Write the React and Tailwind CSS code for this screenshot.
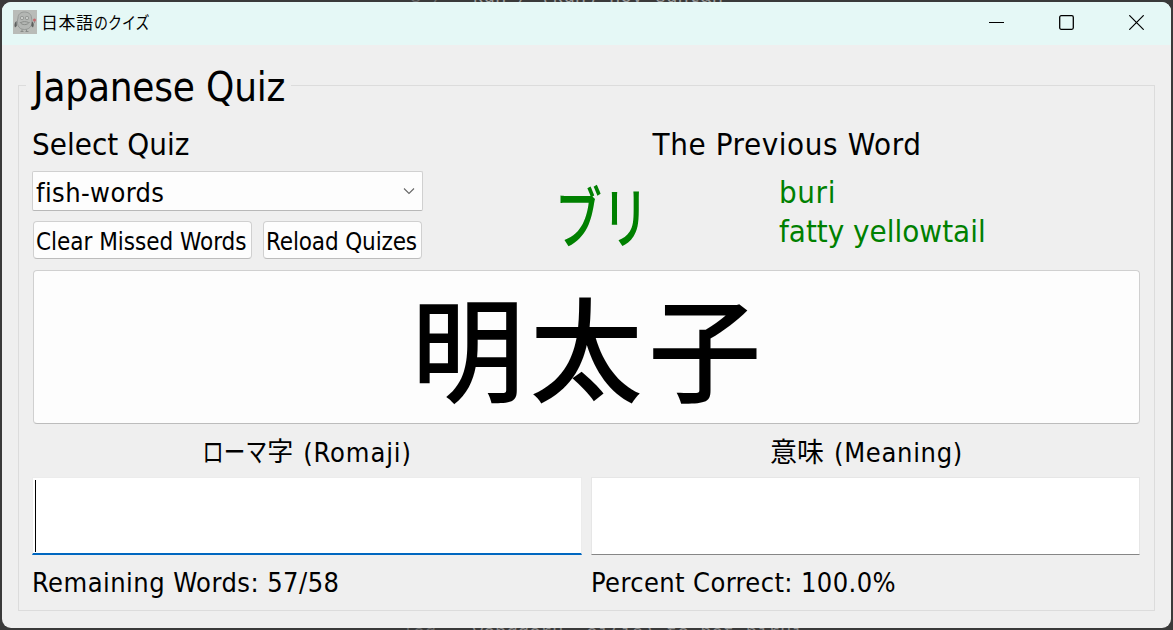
function AppIcon() {
  return (
    <svg width="24" height="24" viewBox="0 0 24 24" className="block">
      <rect width="24" height="24" fill="#b9bcb8" />
      <path d="M5 8c0-4 3-6 6.500-6s7 2 7 6c1.500 5 0 11.500-7 11.500S3.500 13 5 8z" fill="#b3b6b3" stroke="#929593" strokeWidth=".9" />
      <path d="M3.500 11c-2 1.500-2.600 4-1.500 6.500l1.800-1.500zM19 11.500c2 1 2.300 3.500 1 6l-1.800-1.500z" fill="#5d605e" />
      <circle cx="9" cy="8" r="1.700" fill="#c8cbc8" stroke="#858885" strokeWidth=".7" />
      <circle cx="14" cy="8" r="1.700" fill="#c8cbc8" stroke="#858885" strokeWidth=".7" />
      <path d="M7 12c1.500 3.500 7.500 3.500 9.500 0M8 12.500c2-1.200 5-1.200 7.500 0" fill="none" stroke="#858885" strokeWidth=".9" />
      <path d="M9 19.500v2M13.500 19.500v2M7.500 21.500h3M12.500 21.500h3" stroke="#858885" strokeWidth=".9" />
      <path d="M21.500 9v4" stroke="#858885" strokeWidth=".8" />
      <circle cx="21.500" cy="10" r="1.500" fill="#c4686c" />
    </svg>
  );
}

function TitleBar() {
  return (
    <header className="flex h-[43px] items-center bg-[#e5f8f6] pl-[11px]">
      <div className="pb-[3px]">
        <AppIcon />
      </div>
      <h1 className="ml-[4px] flex pb-[2px] text-[17px] leading-[20px]">
        <span className="tracking-[0.5px]">日本語</span>
        <span className="origin-left scale-x-[0.82]">のクイズ</span>
      </h1>
      <div className="ml-auto flex h-full pb-[3px]">
        <button aria-label="Minimize" className="flex w-[69px] items-center justify-center">
          <svg width="15" height="15" viewBox="0 0 15 15"><path d="M0 7.500h15" stroke="#000" /></svg>
        </button>
        <button aria-label="Maximize" className="flex w-[71px] items-center justify-center">
          <svg width="15" height="15" viewBox="0 0 15 15"><rect x=".7" y=".7" width="13.600" height="13.600" rx="1.500" fill="none" stroke="#000" strokeWidth="1.300" /></svg>
        </button>
        <button aria-label="Close" className="flex w-[69px] items-center justify-center">
          <svg width="15" height="15" viewBox="0 0 15 15"><path d="M.3.3l14.400 14.400M14.700.3L.3 14.700" stroke="#000" strokeWidth="1.200" /></svg>
        </button>
      </div>
    </header>
  );
}

function QuizPicker() {
  return (
    <section className="w-[391px]">
      <h2 className="h-[31px] text-[31px] leading-[32px] tracking-[0.05px]">Select Quiz</h2>
      <button className="mt-[12px] flex h-[40px] w-full items-center justify-between rounded-[2px] border border-[#d0d0d0] border-b-[#b8b8b8] bg-[#fdfdfd] pr-[7px] pl-[3px] text-[27px] tracking-[0.4px]">
        <span className="pt-[2px] leading-[35px]">fish-words</span>
        <svg width="12" height="8" viewBox="0 0 12 8"><path d="M1 1.500l5 5 5-5" fill="none" stroke="#666" strokeWidth="1.100" /></svg>
      </button>
      <div className="mt-[10px] flex gap-[11px] pl-px text-[24px] leading-[35px] whitespace-nowrap">
        <button className="flex h-[38px] w-[219px] items-start rounded-[4px] border border-[#d0d0d0] border-b-[#bcbcbc] bg-[#fdfdfd] pt-[3px] pl-[2px] tracking-[-0.02px]">Clear Missed Words</button>
        <button className="flex h-[38px] w-[159px] items-start rounded-[4px] border border-[#d0d0d0] border-b-[#bcbcbc] bg-[#fdfdfd] pt-[3px] pl-[2px] tracking-[-0.14px]">Reload Quizes</button>
      </div>
    </section>
  );
}

function PreviousWord() {
  return (
    <section className="flex-1">
      <h2 className="h-[31px] pl-[2px] text-center text-[31px] leading-[32px] tracking-[0.6px]">The Previous Word</h2>
      <div className="mt-[14px] flex text-[#008000]">
        <div className="flex h-[78px] w-[338px] justify-center pt-[8px] pl-[2px] text-[67px] leading-[78px]">
          <span className="scale-x-[0.7] font-medium">ブリ</span>
        </div>
        <div className="ml-[9px] text-[31px] leading-[39px]">
          <p className="tracking-[0.6px]">buri</p>
          <p>fatty yellowtail</p>
        </div>
      </div>
    </section>
  );
}

export default function App() {
  return (
    <div className="flex h-[630px] w-[1173px] flex-col overflow-hidden bg-[#3a3a3a] font-['DejaVu_Sans_Condensed','Noto_Sans_CJK_JP',sans-serif] text-black">
      <div aria-hidden="true" className="flex h-[2px] items-end overflow-hidden pl-[410px] font-['Liberation_Mono'] text-[19px] leading-[10px] whitespace-pre text-[#9a9a9a]">
        <span className="text-[#6a6a6a]">8 /</span>
        <span className="ml-[28px]">kun / (kun) nov suntan</span>
      </div>
      <main className="mx-[2px] flex h-[626px] flex-col overflow-hidden rounded-[9px] bg-[#efefef]">
        <TitleBar />
        <fieldset className="mx-[16px] mt-[17px] h-[549px] min-w-0 border border-[#dcdcdc] pr-[14px] pl-[13px]">
          <legend className="-ml-[6px] h-[46px] pr-[6px] pl-[7px] text-[40px] leading-[50px] tracking-[-0.2px]">Japanese Quiz</legend>
          <div className="flex gap-[9px] pt-[20px]">
            <QuizPicker />
            <PreviousWord />
          </div>
          <div className="mt-[11px] ml-px flex h-[154px] justify-center rounded-[4px] border border-[#d0d0d0] border-b-[#bcbcbc] bg-[#fdfdfd] pt-[7px] pl-[5px] text-[113px] leading-[152px] font-medium tracking-[5.5px]">明太子</div>
          <div className="grid grid-cols-[550px_549px] gap-x-[9px] text-[27px]">
            <label htmlFor="romaji" className="flex h-[53px] items-center justify-center pt-[4px] leading-[49px]">
              <span className="-ml-[16px] origin-right scale-x-[0.8]">ローマ</span>
              <span className="text-[26px]">字</span>
              <span className="ml-[10px] tracking-[0.9px]">(Romaji)</span>
            </label>
            <label htmlFor="meaning" className="flex h-[53px] items-center justify-center pt-[4px] pl-[2px] leading-[49px]">
              意味<span className="ml-[10px] tracking-[0.7px]">(Meaning)</span>
            </label>
            <div id="romaji" className="h-[78px] border border-b-2 border-[#ececec] border-b-[#0067c0] bg-white pt-[2px] pl-[2px]">
              <div className="h-[72px] w-px bg-black" />
            </div>
            <div id="meaning" className="h-[78px] border border-[#e6e6e6] border-b-[#868686] bg-white" />
            <p className="pt-[3px] leading-[50px] tracking-[0.46px]">Remaining Words: 57/58</p>
            <p className="pt-[3px] leading-[50px] tracking-[0.39px]">Percent Correct: 100.0%</p>
          </div>
        </fieldset>
      </main>
      <div aria-hidden="true" className="flex h-[2px] items-start overflow-hidden pl-[402px] font-['Liberation_Mono'] text-[19px] leading-[10px] whitespace-pre text-[#8a8a8a]">
        <span className="text-[#6a6a6a]">lag</span>
        <span className="ml-[36px]">yonggoru .ei(is) to nat nirui</span>
      </div>
    </div>
  );
}
